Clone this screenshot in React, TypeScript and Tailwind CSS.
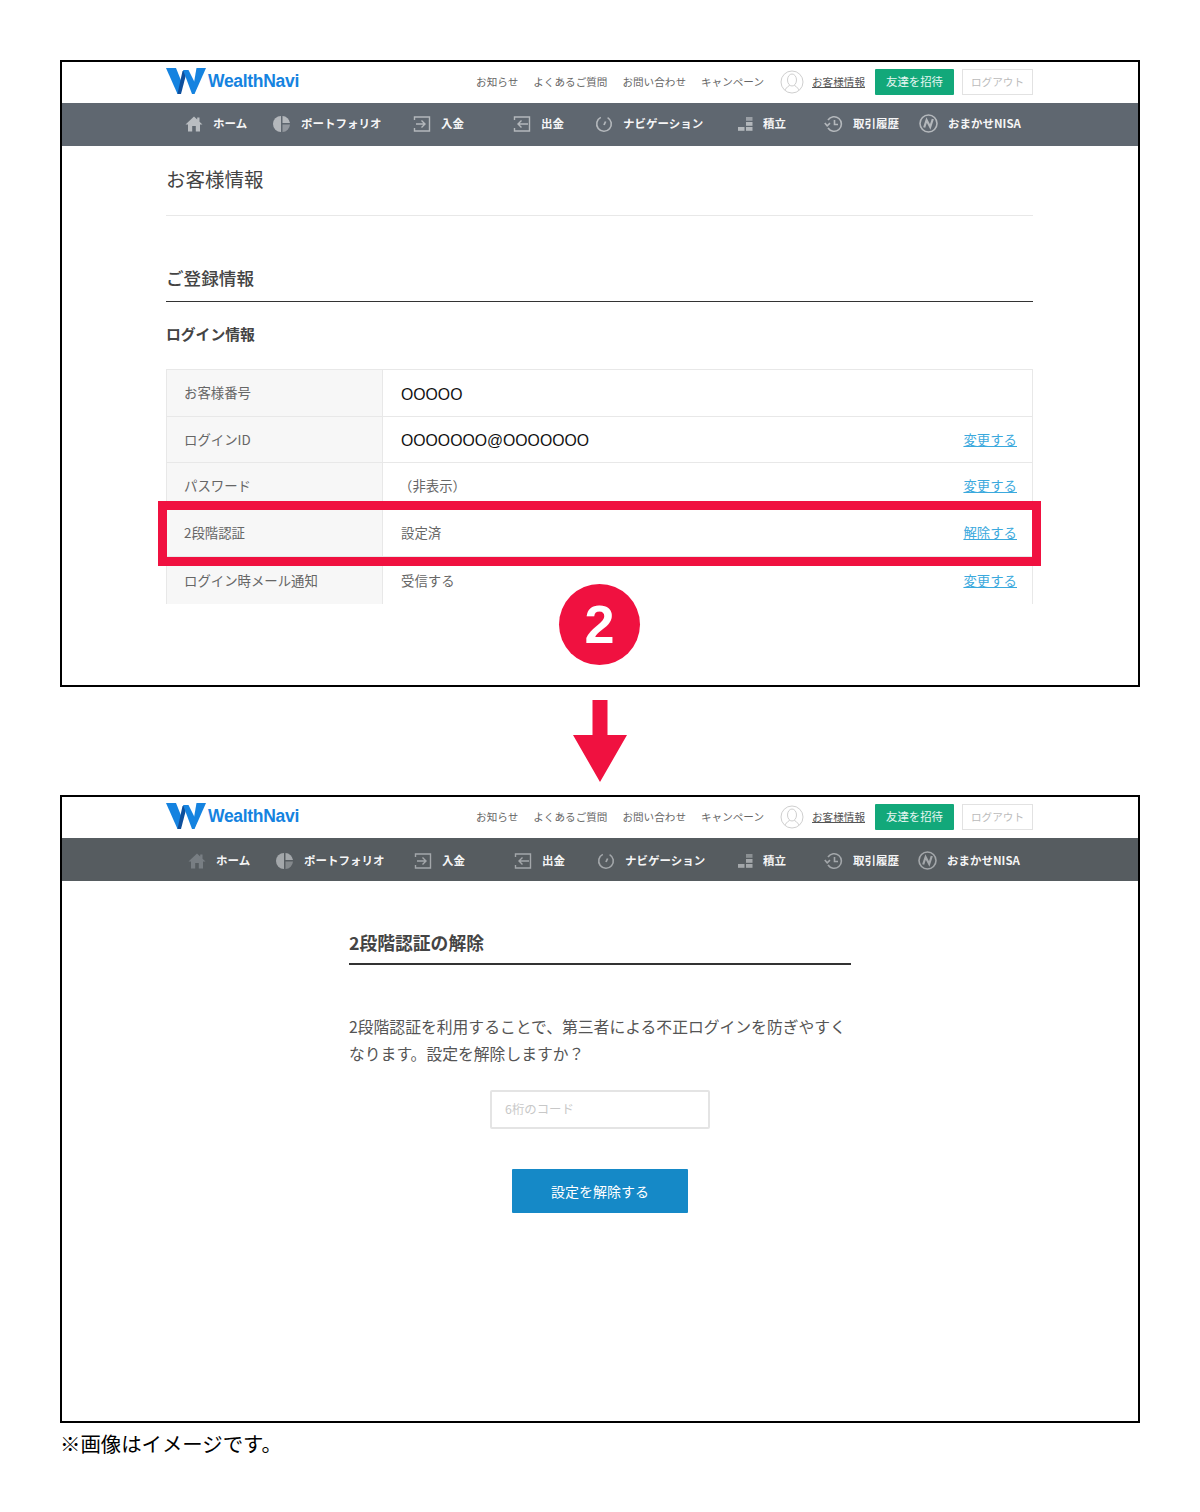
import type { ReactNode } from "react";

type IconName = "home" | "pie" | "in" | "out" | "nav" | "stack" | "history" | "nisa";

interface NavItem {
  icon: IconName;
  label: string;
  width: string;
}

const NAV_TOP: NavItem[] = [
  { icon: "home", label: "ホーム", width: "w-[88px]" },
  { icon: "pie", label: "ポートフォリオ", width: "w-[140px]" },
  { icon: "in", label: "入金", width: "w-[100px]" },
  { icon: "out", label: "出金", width: "w-[82px]" },
  { icon: "nav", label: "ナビゲーション", width: "w-[142px]" },
  { icon: "stack", label: "積立", width: "w-[87px]" },
  { icon: "history", label: "取引履歴", width: "w-[95px]" },
  { icon: "nisa", label: "おまかせNISA", width: "w-[110px]" },
];

const NAV_BOTTOM: NavItem[] = [
  { icon: "home", label: "ホーム", width: "w-[88px]" },
  { icon: "pie", label: "ポートフォリオ", width: "w-[138px]" },
  { icon: "in", label: "入金", width: "w-[100px]" },
  { icon: "out", label: "出金", width: "w-[83px]" },
  { icon: "nav", label: "ナビゲーション", width: "w-[140px]" },
  { icon: "stack", label: "積立", width: "w-[87px]" },
  { icon: "history", label: "取引履歴", width: "w-[94px]" },
  { icon: "nisa", label: "おまかせNISA", width: "w-[110px]" },
];

const LINKS = ["お知らせ", "よくあるご質問", "お問い合わせ", "キャンペーン"];

function NavIcon({ name, muted }: { name: IconName; muted?: boolean }) {
  const color = muted ? "#787e83" : "#b9bdc1";
  const stroke = muted ? "#a3a7aa" : "#b4b8bc";
  if (name === "home") {
    return (
      <svg width="18" height="18" viewBox="0 0 18 18" fill={color}>
        <path d="M9 1.5 L0.5 9.5 L3 9.5 L3 16.5 L7.2 16.5 L7.2 11 L10.8 11 L10.8 16.5 L15 16.5 L15 9.5 L17.5 9.5 L14.5 6.7 L14.5 2.5 L12.2 2.5 L12.2 4.5 Z" />
      </svg>
    );
  }
  if (name === "pie") {
    return (
      <svg width="18" height="18" viewBox="0 0 18 18" fill={stroke}>
        <path d="M8 1 A8 8 0 0 0 8 17 Z" />
        <path d="M9.5 1 A8 8 0 0 1 17 8 L9.5 8 Z" />
        <path d="M9.5 9.5 L17 9.5 A8 8 0 0 1 9.5 17 Z" fillOpacity="0.6" />
      </svg>
    );
  }
  if (name === "in") {
    return (
      <svg width="18" height="18" viewBox="0 0 18 18" fill="none" stroke={stroke} strokeWidth="1.4">
        <path d="M1.5 5 V2 H16.5 V16 H1.5 V13" />
        <path d="M3 9 H12 M8.5 5.5 L12 9 L8.5 12.5" />
      </svg>
    );
  }
  if (name === "out") {
    return (
      <svg width="18" height="18" viewBox="0 0 18 18" fill="none" stroke={stroke} strokeWidth="1.4">
        <path d="M1.5 5 V2 H16.5 V16 H1.5 V13" />
        <path d="M15 9 H5 M8.5 5.5 L5 9 L8.5 12.5" />
      </svg>
    );
  }
  if (name === "nav") {
    return (
      <svg width="18" height="18" viewBox="0 0 18 18" fill="none" stroke={stroke} strokeWidth="1.6">
        <path d="M5.8 2.4 A7.3 7.3 0 1 0 12.6 2.6" />
        <path d="M9 10 L10.6 6.5" strokeWidth="1.8" />
      </svg>
    );
  }
  if (name === "stack") {
    return (
      <svg width="16" height="16" viewBox="0 0 16 16" fill={stroke}>
        <rect x="9" y="1" width="6.5" height="3.8" fillOpacity="0.7" />
        <rect x="9" y="6" width="6.5" height="3.8" />
        <rect x="9" y="11" width="6.5" height="3.8" />
        <rect x="1" y="11" width="6.5" height="3.8" />
      </svg>
    );
  }
  if (name === "history") {
    return (
      <svg width="19" height="18" viewBox="0 0 19 18" fill="none" stroke={stroke} strokeWidth="1.6">
        <path d="M4 5 A7.3 7.3 0 1 1 4 13" />
        <path d="M0.8 8 L3.2 10.8 L6 8.2" />
        <path d="M10.5 5 V9.5 H14" />
      </svg>
    );
  }
  return (
    <svg width="19" height="19" viewBox="0 0 19 19" fill="none" stroke={stroke} strokeWidth="1.6">
      <circle cx="9.5" cy="9.5" r="8.5" />
      <path d="M5.2 13.5 L7.6 6 L11.2 13 L13.8 5" strokeWidth="2.2" />
    </svg>
  );
}

function Logo() {
  return (
    <div className="flex items-center">
      <svg width="40" height="27" viewBox="0 0 40 27">
        <path d="M0 0 H10 L16 15 L13 26 H11.5 Z" fill="#1583e0" />
        <path d="M16.5 3 H21 L15 26 H11.5 Z" fill="#0e4f9c" />
        <path d="M17 2 H22.5 L31 19 L28 26 H26 Z" fill="#1583e0" />
        <path d="M30.5 0 H40 L28.5 26 H26 Z" fill="#1583e0" />
      </svg>
      <span className="ml-[2px] font-['Liberation_Sans',sans-serif] text-[17.5px] font-bold tracking-[-0.3px] text-[#1583e0]">WealthNavi</span>
    </div>
  );
}

function AvatarIcon() {
  return (
    <svg width="24" height="24" viewBox="0 0 24 24" fill="none" stroke="#cfcfcf" strokeWidth="1">
      <circle cx="12" cy="12" r="11" />
      <ellipse cx="12" cy="10" rx="4.5" ry="6" />
      <path d="M5 20 C6 17 9 17 9.5 15 M19 20 C18 17 15 17 14.5 15" />
    </svg>
  );
}

function SiteHeader({ items, muted }: { items: NavItem[]; muted?: boolean }) {
  return (
    <>
      <div className="flex h-[41px] items-center justify-between pb-[2px] pl-[104px] pr-[105px]">
        <Logo />
        <div className="flex items-center text-[10.6px] text-[#666]">
          {LINKS.map((link) => (
            <span key={link} className="mr-[15px]">{link}</span>
          ))}
          <span className="ml-[1px] mr-[8px] flex"><AvatarIcon /></span>
          <span className="text-[#555] underline">お客様情報</span>
          <span className="ml-[10px] flex h-[26px] w-[79px] items-center justify-center rounded-[1px] bg-[#12a87a] text-[11.4px] text-white/90">友達を招待</span>
          <span className="ml-[8px] flex h-[26px] w-[71px] items-center justify-center border border-[#e2e2e2] text-[#bbb]">ログアウト</span>
        </div>
      </div>
      <nav className={`flex h-[43px] items-center ${muted ? "bg-[#565c60] pl-[126px] pt-[2px]" : "bg-[#5f6770] pb-[2px] pl-[123px]"}`}>
        {items.map((item) => (
          <div key={item.label} className={`flex shrink-0 items-center gap-[10px] ${item.width}`}>
            <NavIcon name={item.icon} muted={muted} />
            <span className="text-[11.5px] font-bold text-white/95">{item.label}</span>
          </div>
        ))}
      </nav>
    </>
  );
}

function TableRow({ label, height, action, children }: { label: string; height: string; action?: string; children: ReactNode }) {
  return (
    <div className={`flex border-t border-[#e8e8e8] text-[13.4px] text-[#666] ${height}`}>
      <div className="flex w-[216px] shrink-0 items-center border-r border-[#e8e8e8] bg-[#f7f7f7] pb-[1px] pl-[17px]">{label}</div>
      <div className="flex flex-1 items-center justify-between pb-[1px] pl-[18px] pr-[15px]">
        <span>{children}</span>
        {action ? <a className="text-[#3ba9dd] underline">{action}</a> : null}
      </div>
    </div>
  );
}

function Masked({ children }: { children: string }) {
  return <span className="inline-block pt-[4px] font-['Liberation_Sans',sans-serif] text-[15.8px] text-[#111]">{children}</span>;
}

function AccountScreen() {
  return (
    <section className="relative h-[627px] border-2 border-black bg-white">
      <SiteHeader items={NAV_TOP} />
      <div className="pl-[104px] pr-[105px]">
        <h1 className="flex h-[70px] items-center border-b border-[#e8e8e8] pb-[4px] text-[19.5px] font-normal text-[#444]">お客様情報</h1>
        <h2 className="mt-[42px] flex h-[44px] items-center border-b border-[#333] pb-[3px] text-[17.6px] font-medium text-[#444]">ご登録情報</h2>
        <h3 className="mt-[20px] text-[14.8px] font-bold leading-[24px] text-[#444]">ログイン情報</h3>
        <div className="mt-[23px] h-[235px] overflow-hidden border-x border-[#e8e8e8]">
          <TableRow label="お客様番号" height="h-[47px]"><Masked>OOOOO</Masked></TableRow>
          <TableRow label="ログインID" height="h-[46px]" action="変更する"><Masked>OOOOOOO@OOOOOOO</Masked></TableRow>
          <TableRow label="パスワード" height="h-[47px]" action="変更する"><span className="ml-[-2px]">（非表示）</span></TableRow>
          <TableRow label="2段階認証" height="h-[47px]" action="解除する">設定済</TableRow>
          <TableRow label="ログイン時メール通知" height="h-[48px]" action="変更する">受信する</TableRow>
        </div>
      </div>
      <div className="absolute left-[96px] top-[439px] h-[65px] w-[883px] border-[9px] border-[#f01140]" />
      <div className="absolute left-[497px] top-[522px] flex h-[81px] w-[81px] items-center justify-center rounded-full bg-[#f01140] font-['Liberation_Sans',sans-serif] text-[54px] font-bold text-white">2</div>
    </section>
  );
}

function DisableScreen() {
  return (
    <section className="h-[628px] border-2 border-black bg-white">
      <SiteHeader items={NAV_BOTTOM} muted />
      <div className="mx-auto flex w-[502px] flex-col">
        <h2 className="mt-[47px] flex h-[37px] items-start border-b-2 border-[#333] text-[17.8px] font-bold leading-[28px] text-[#444]">2段階認証の解除</h2>
        <p className="mt-[48px] text-[15.8px] leading-[27px] text-[#555]">
          2段階認証を利用することで、第三者による不正ログインを防ぎやすく
          <br />
          なります。設定を解除しますか？
        </p>
        <div className="mt-[23px] flex h-[39px] w-[220px] items-center self-center rounded-[2px] border-2 border-[#e4e4e4] pl-[13px] text-[12.4px] text-[#c8c8c8]">6桁のコード</div>
        <button type="button" className="mt-[40px] flex h-[44px] w-[176px] items-center justify-center self-center rounded-[1px] bg-[#1589c7] text-[14px] text-white">設定を解除する</button>
      </div>
    </section>
  );
}

export default function App() {
  return (
    <div className="h-[1512px] bg-white px-[60px] pt-[60px] font-['Noto_Sans_CJK_JP','Liberation_Sans',sans-serif]">
      <AccountScreen />
      <div className="flex h-[108px] justify-center pt-[13px]">
        <svg width="56" height="82" viewBox="0 0 56 82" fill="#f01140">
          <path d="M20.5 0 H35.5 V35 H55 L28 82 L1 35 H20.5 Z" />
        </svg>
      </div>
      <DisableScreen />
      <p className="mt-[6px] text-[20.4px] leading-[28px] text-black">※画像はイメージです。</p>
    </div>
  );
}
